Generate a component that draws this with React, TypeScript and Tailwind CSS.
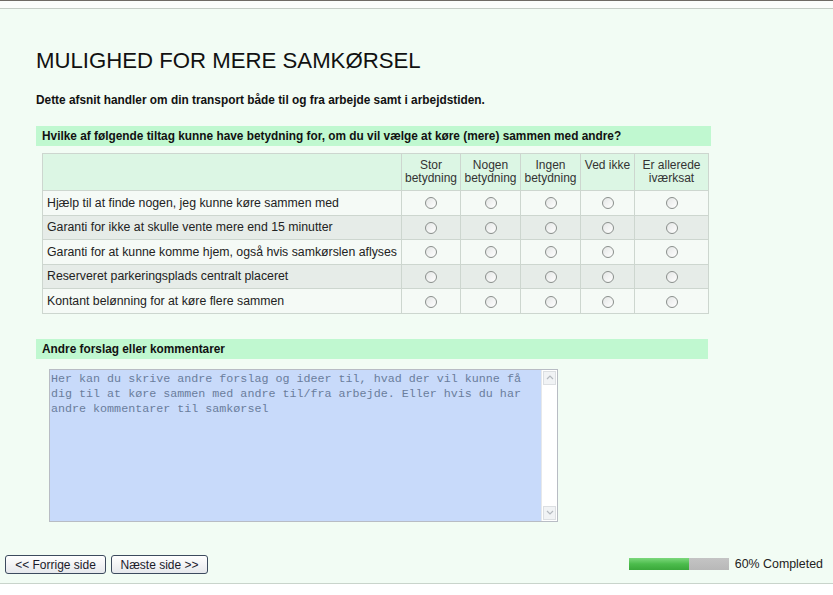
import React from "react";

const rows = [
  "Hjælp til at finde nogen, jeg kunne køre sammen med",
  "Garanti for ikke at skulle vente mere end 15 minutter",
  "Garanti for at kunne komme hjem, også hvis samkørslen aflyses",
  "Reserveret parkeringsplads centralt placeret",
  "Kontant belønning for at køre flere sammen",
];

const cols = [
  { label: ["Stor", "betydning"], w: "w-[59px]" },
  { label: ["Nogen", "betydning"], w: "w-[60px]" },
  { label: ["Ingen", "betydning"], w: "w-[60px]" },
  { label: ["Ved ikke"], w: "w-[54px]" },
  { label: ["Er allerede", "iværksat"], w: "w-[74px]" },
];

const Radio = () => (
  <span className="inline-block h-[12px] w-[12px] rounded-full border border-[#8a8f8c] bg-gradient-to-br from-[#e4e6e5] to-white" />
);

const Btn = ({ children, w }: { children: React.ReactNode; w: string }) => (
  <button
    className={`${w} h-[19px] rounded-[3px] border border-[#3c4a5e] bg-gradient-to-b from-white to-[#e6e8ec] text-[12px] leading-none text-[#1a1a2a]`}
  >
    {children}
  </button>
);

export default function App() {
  return (
    <div className="w-[833px] h-[595px] overflow-hidden bg-white text-[#111] [font-family:'Liberation_Sans',Arial,sans-serif]">
      <div className="h-[1px] bg-[#6e6a64]" />
      <div className="h-[8px] bg-[#fbfdfb] border-b border-[#c5cdc6]" />
      <div className="h-[575px] bg-[#f2fcf4] border-b border-[#c9d4cb] flex flex-col">
        <h1 className="ml-[36px] mt-[39px] text-[22.2px] leading-[26px] font-normal text-[#111]">
          MULIGHED FOR MERE SAMKØRSEL
        </h1>
        <p className="ml-[36px] mt-[19px] text-[11.85px] font-bold leading-[15px]">
          Dette afsnit handler om din transport både til og fra arbejde samt i arbejdstiden.
        </p>
        <div className="ml-[36px] mt-[18px] w-[675px] h-[20px] bg-[#c0f8d0] pl-[6px] text-[11.85px] font-bold leading-[20px]">
          Hvilke af følgende tiltag kunne have betydning for, om du vil vælge at køre (mere) sammen med andre?
        </div>
        <table className="ml-[42px] mt-[7px] w-[667px] border-collapse text-[12.3px] text-[#222]">
          <thead>
            <tr className="h-[37px] bg-[#dcf6e4]">
              <th className="border border-[#cdd6cf]" />
              {cols.map((c, i) => (
                <th
                  key={i}
                  className={`${c.w} border border-[#cdd6cf] align-top pt-[5px] font-normal text-[12px] leading-[13px] text-[#333]`}
                >
                  {c.label.map((l, j) => (
                    <div key={j}>{l}</div>
                  ))}
                </th>
              ))}
            </tr>
          </thead>
          <tbody>
            {rows.map((r, i) => (
              <tr key={i} className={`h-[24.6px] ${i % 2 ? "bg-[#e6ece8]" : "bg-[#f5faf6]"}`}>
                <td className="border border-[#cdd6cf] pl-[4px] text-left">{r}</td>
                {cols.map((_, j) => (
                  <td key={j} className="border border-[#cdd6cf] text-center align-middle">
                    <div className="flex justify-center pt-[1px]">
                      <Radio />
                    </div>
                  </td>
                ))}
              </tr>
            ))}
          </tbody>
        </table>
        <div className="ml-[36px] mt-[25px] w-[672px] h-[20px] bg-[#c0f8d0] pl-[6px] text-[11.85px] font-bold leading-[20px]">
          Andre forslag eller kommentarer
        </div>
        <div className="ml-[49px] mt-[10px] w-[509px] h-[153px] flex border border-[#b8bcc4]">
          <div className="flex-1 bg-[#c8dafa] pl-[1px] pt-[2px] text-[11.7px] leading-[15px] text-[#6a7d9c] [font-family:'Liberation_Mono','Courier_New',monospace] whitespace-pre-wrap">
            {"Her kan du skrive andre forslag og ideer til, hvad der vil kunne få\ndig til at køre sammen med andre til/fra arbejde. Eller hvis du har\nandre kommentarer til samkørsel"}
          </div>
          <div className="w-[16px] bg-white border-l border-[#e6e8ea] flex flex-col justify-between">
            <div className="h-[14px] m-[1px] border border-[#dcdfe2] bg-[#f1f3f5] flex items-center justify-center">
              <svg width="8" height="5" viewBox="0 0 8 5"><path d="M1 4 L4 1 L7 4" fill="none" stroke="#b4b9bf" strokeWidth="1.2" /></svg>
            </div>
            <div className="h-[14px] m-[1px] border border-[#dcdfe2] bg-[#f1f3f5] flex items-center justify-center">
              <svg width="8" height="5" viewBox="0 0 8 5"><path d="M1 1 L4 4 L7 1" fill="none" stroke="#b4b9bf" strokeWidth="1.2" /></svg>
            </div>
          </div>
        </div>
        <div className="mt-auto mb-[9px] flex items-center px-[5px]">
          <div className="flex gap-[5px]">
            <Btn w="w-[101px]">&lt;&lt; Forrige side</Btn>
            <Btn w="w-[97px]">Næste side &gt;&gt;</Btn>
          </div>
          <div className="ml-auto flex items-center mr-[5px]">
            <div className="w-[100px] h-[12px] bg-gradient-to-b from-[#c4c4c4] to-[#b8b8b8] flex">
              <div className="w-[60%] bg-gradient-to-b from-[#7bd87b] via-[#4cbc4c] to-[#3aa83a]" />
            </div>
            <span className="ml-[6px] text-[12.4px] text-[#222]">60% Completed</span>
          </div>
        </div>
      </div>
    </div>
  );
}
